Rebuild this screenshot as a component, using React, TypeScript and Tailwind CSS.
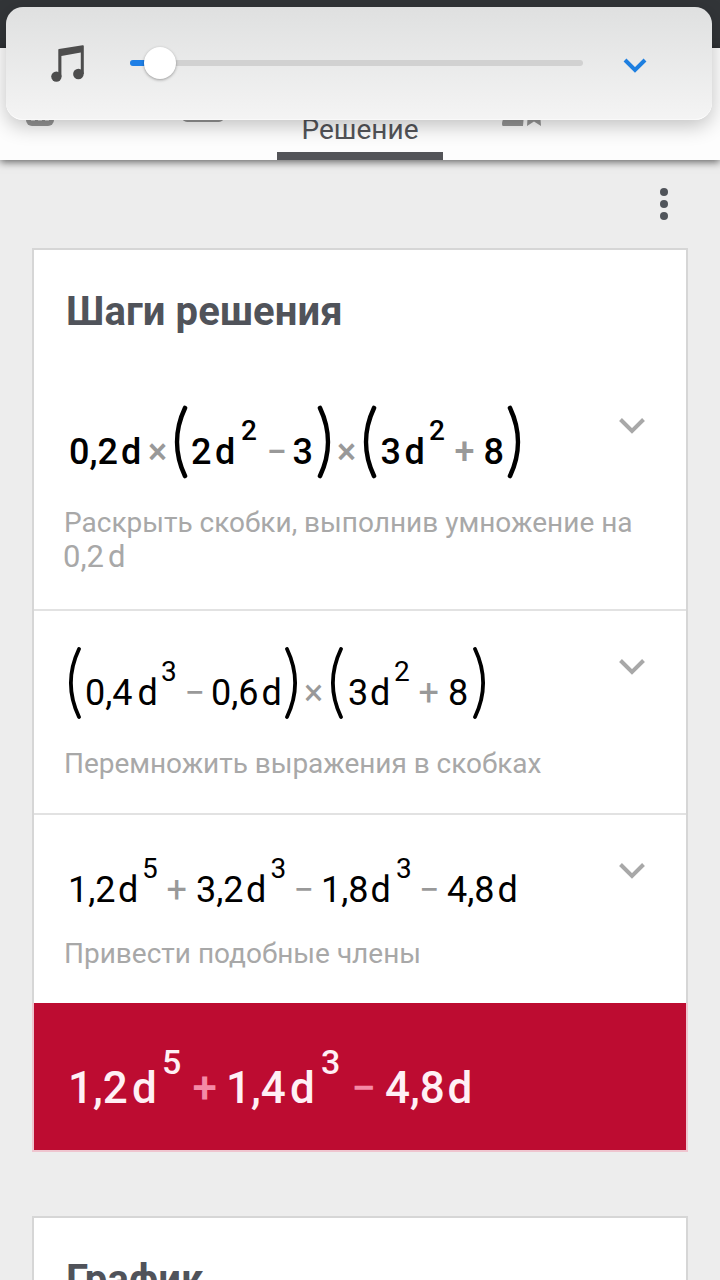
import React from 'react';
import clsx from 'clsx';

type TokenKind = 'num' | 'op' | 'sup' | 'open' | 'close';

interface Token {
  kind: TokenKind;
  text: string;
  // advance of the token up to the start of the next one
  w: string;
}

const n = (text: string, w: string): Token => ({ kind: 'num', text, w });
const op = (text: string, w: string): Token => ({ kind: 'op', text, w });
const sup = (text: string, w: string): Token => ({ kind: 'sup', text, w });
const open = (w: string): Token => ({ kind: 'open', text: '(', w });
const close = (w: string): Token => ({ kind: 'close', text: ')', w });

const stepOne: Token[] = [
  n('0,2', 'w-[52px]'),
  n('d', 'w-[27px]'),
  op('×', 'w-[26px]'),
  open('w-[17px]'),
  n('2', 'w-[24px]'),
  n('d', 'w-[26px]'),
  sup('2', 'w-[25.5px]'),
  op('−', 'w-[26px]'),
  n('3', 'w-[24.5px]'),
  close('w-[20px]'),
  op('×', 'w-[26px]'),
  open('w-[17.5px]'),
  n('3', 'w-[24px]'),
  n('d', 'w-[24.5px]'),
  sup('2', 'w-[25.5px]'),
  op('+', 'w-[29px]'),
  n('8', 'w-[23.5px]'),
  close('w-[14px]'),
];

const stepTwo: Token[] = [
  open('w-[17px]'),
  n('0,4', 'w-[52.5px]'),
  n('d', 'w-[23.5px]'),
  sup('3', 'w-[23.5px]'),
  op('−', 'w-[26.5px]'),
  n('0,6', 'w-[50.5px]'),
  n('d', 'w-[22.5px]'),
  close('w-[20px]'),
  op('×', 'w-[26px]'),
  open('w-[18px]'),
  n('3', 'w-[22px]'),
  n('d', 'w-[24px]'),
  sup('2', 'w-[24.5px]'),
  op('+', 'w-[29.5px]'),
  n('8', 'w-[23.5px]'),
  close('w-[14px]'),
];

const stepThree: Token[] = [
  n('1,2', 'w-[50px]'),
  n('d', 'w-[24px]'),
  sup('5', 'w-[24.5px]'),
  op('+', 'w-[29.5px]'),
  n('3,2', 'w-[50px]'),
  n('d', 'w-[24.5px]'),
  sup('3', 'w-[23px]'),
  op('−', 'w-[27.5px]'),
  n('1,8', 'w-[49.5px]'),
  n('d', 'w-[25.5px]'),
  sup('3', 'w-[23px]'),
  op('−', 'w-[28px]'),
  n('4,8', 'w-[50.5px]'),
  n('d', 'w-[24px]'),
];

const result: Token[] = [
  n('1,2', 'w-[64px]'),
  n('d', 'w-[30px]'),
  sup('5', 'w-[30.5px]'),
  op('+', 'w-[33.5px]'),
  n('1,4', 'w-[64px]'),
  n('d', 'w-[31px]'),
  sup('3', 'w-[30.5px]'),
  op('−', 'w-[33.5px]'),
  n('4,8', 'w-[62.5px]'),
  n('d', 'w-[30px]'),
];

const Paren: React.FC<{ flip?: boolean; bold?: boolean }> = ({ flip, bold }) => (
  <svg
    width="14"
    height="74"
    viewBox="0 0 14 74"
    fill="none"
    stroke="black"
    strokeWidth={bold ? 4.6 : 3.8}
    strokeLinecap="round"
    className={clsx('shrink-0', flip && '-scale-x-100')}
  >
    <path d="M11 3C0.5 25 0.5 49 11 71" />
  </svg>
);

interface FormulaProps {
  tokens: Token[];
  bold?: boolean;
  large?: boolean;
}

const Formula: React.FC<FormulaProps> = ({ tokens, bold, large }) => (
  <div
    className={clsx(
      'flex h-[74px] items-start whitespace-nowrap',
      large ? 'text-[44px] leading-[52px] text-[#fff0f5]' : 'text-[36px] leading-[44px] text-black',
      (bold || large) && 'font-medium',
      bold && 'pl-px'
    )}
  >
    {tokens.map((token, i) => {
      if (token.kind === 'open' || token.kind === 'close') {
        return (
          <span key={i} className={clsx('flex shrink-0', token.w)}>
            <Paren flip={token.kind === 'close'} bold={bold} />
          </span>
        );
      }
      return (
        <span
          key={i}
          className={clsx(
            'block shrink-0',
            token.w,
            token.kind === 'num' && (large ? 'pt-[24px]' : 'pt-[25px]'),
            token.kind === 'op' && (large ? 'pt-[24px] text-[#f58aa6]' : 'pt-[25px] text-[#999999]'),
            token.kind === 'sup' &&
              (large ? 'pt-[4px] text-[34px] leading-[40px]' : 'pt-[9px] text-[28px] leading-[34px]')
          )}
        >
          {token.text}
        </span>
      );
    })}
  </div>
);

const Chevron: React.FC = () => (
  <svg width="26" height="16" viewBox="0 0 26 16" fill="none" stroke="#a8a8a8" strokeWidth="4" className="shrink-0">
    <path d="M1.5 1.5L13 13L24.5 1.5" />
  </svg>
);

const VolumePanel: React.FC = () => (
  <div className="absolute top-[7px] left-[6px] z-20 flex h-[113px] w-[706px] items-center rounded-[17px] border-b border-white/80 bg-linear-to-b from-[#dfe0e0] to-[#f4f4f4] shadow-[0_6px_20px_rgba(0,0,0,0.24)]">
    <svg width="34" height="38" viewBox="0 0 34 38" fill="#4d4d4d" className="mt-[2px] ml-[45px] shrink-0">
      <path d="M7.3 4.8Q7.3 4.1 8 4L31.6 0.2Q32.8 0 32.8 1V29H29.8V7.6L10.4 11V31.5H7.3Z" />
      <circle cx="5.4" cy="31.6" r="5.2" />
      <circle cx="27.4" cy="29" r="5.3" />
    </svg>
    <div className="relative ml-[45px] h-[6px] w-[453px] rounded-[3px] bg-[#d1d1d1]">
      <div className="h-full w-[30px] rounded-[3px] bg-[#1e7fe6]" />
      <div className="absolute -top-[13px] left-[14px] size-[32px] rounded-full bg-white shadow-[0_1px_3px_rgba(0,0,0,0.35)]" />
    </div>
    <svg width="24" height="16" viewBox="0 0 24 16" fill="none" stroke="#1e7fe0" strokeWidth="4" className="mt-[5px] ml-[40px]">
      <path d="M2 2L12 12L22 2" />
    </svg>
  </div>
);

const TabBar: React.FC = () => (
  <div className="relative z-10 flex h-[112px] shrink-0 bg-[#fdfdfd] shadow-[0_2px_8px_rgba(0,0,0,0.6)]">
    <div className="flex w-[120px] pt-[50px] pl-[26px]">
      <svg width="28" height="28" viewBox="0 0 28 28">
        <rect width="28" height="28" rx="6" fill="#969696" />
        <path d="M5 21.5h4M12 21.5h4M19 21.5h4" stroke="#fff" strokeWidth="2" />
      </svg>
    </div>
    <div className="flex w-[157px] pt-[46px] pl-[62px]">
      <div className="h-[28px] w-[42px] rounded-[5px] bg-[#969696]" />
    </div>
    <div className="flex w-[166px] flex-col items-center border-b-[8px] border-[#535458] pt-[66px]">
      <span className="text-[28px] leading-[32px] text-[#535458]">Решение</span>
    </div>
    <div className="pt-[54px] pl-[59px]">
      <svg width="40" height="24" viewBox="0 0 40 24" fill="#969696">
        <path d="M4 12H22L21 24H1Q0 24 0 22Q0 18 4 12Z" />
        <path d="M25 24L26 10H38L39 24L32 19.5Z" />
      </svg>
    </div>
  </div>
);

interface StepProps {
  tokens: Token[];
  bold?: boolean;
  className: string;
  chevronClass: string;
  children: React.ReactNode;
}

const Step: React.FC<StepProps> = ({ tokens, bold, className, chevronClass, children }) => (
  <div className={clsx('flex shrink-0 flex-col', className)}>
    <div className="flex justify-between pr-[41px] pl-[34px]">
      <Formula tokens={tokens} bold={bold} />
      <div className={chevronClass}>
        <Chevron />
      </div>
    </div>
    {children}
  </div>
);

const App: React.FC = () => {
  return (
    <div className="relative flex h-[1280px] w-[720px] flex-col overflow-hidden bg-[#ededed] font-['Roboto',sans-serif]">
      <div className="h-12 shrink-0 bg-[#323538]" />
      <VolumePanel />
      <TabBar />

      {/* Overflow menu */}
      <div className="flex h-[88px] shrink-0 justify-end pt-7 pr-[52px]">
        <div className="flex flex-col gap-1">
          <span className="size-2 rounded-full bg-[#50545a]" />
          <span className="size-2 rounded-full bg-[#50545a]" />
          <span className="size-2 rounded-full bg-[#50545a]" />
        </div>
      </div>

      <div className="mx-8 flex h-[904px] shrink-0 flex-col border-2 border-[#d6d6d6] bg-white">
        <h2 className="h-[155px] shrink-0 pt-[38px] pl-[32px] text-[40px] leading-[48px] font-bold tracking-[0.1px] text-[#50535a]">
          Шаги решения
        </h2>

        <Step tokens={stepOne} bold className="h-[206px] border-b-2 border-[#e2e2e2]" chevronClass="pt-[13px]">
          <p className="pt-[27px] pl-[30px] text-[28px] leading-[34px] whitespace-nowrap text-[#a8a8a8]">
            Раскрыть скобки, выполнив умножение на
            <br />
            <span className="-ml-px text-[31px]">0,2</span>
            <span className="ml-[4px] text-[31px]">d</span>
          </p>
        </Step>

        <Step tokens={stepTwo} className="h-[204px] border-b-2 border-[#e2e2e2] pt-[35px]" chevronClass="pt-[13px]">
          <p className="pt-[27px] pl-[30px] text-[28px] leading-[34px] tracking-[-0.04px] text-[#a8a8a8]">
            Перемножить выражения в скобках
          </p>
        </Step>

        <Step tokens={stepThree} className="h-[188px] pt-[28px]" chevronClass="pt-[20px]">
          <p className="pt-[20px] pl-[30px] text-[28px] leading-[34px] text-[#a8a8a8]">Привести подобные члены</p>
        </Step>

        <div className="-mx-0.5 -mb-0.5 h-[149px] shrink-0 border-x-2 border-b-2 border-[#efc5cf] bg-[#bd0c31] bg-clip-padding pt-[35px] pl-[34px]">
          <Formula tokens={result} large />
        </div>
      </div>

      <div className="mx-8 mt-16 h-[300px] shrink-0 border-2 border-[#d6d6d6] bg-white">
        <h2 className="pt-[38px] pl-[32px] text-[40px] leading-[48px] font-bold tracking-[0.1px] text-[#50535a]">График</h2>
      </div>
    </div>
  );
};

export default App;
